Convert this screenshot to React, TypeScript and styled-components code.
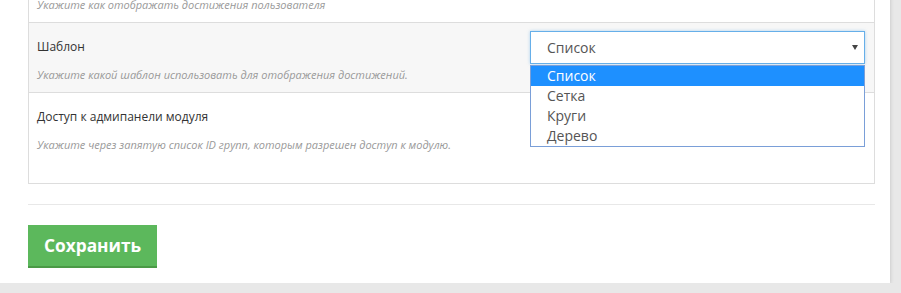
import { createGlobalStyle, styled } from 'styled-components';

const GlobalStyle = createGlobalStyle`
  html, body {
    margin: 0;
    padding: 0;
    background: #e8e8e8;
    overflow: hidden;
    font-family: 'Open Sans', 'Noto Sans', sans-serif;
  }
  * { box-sizing: border-box; }
`;

type Field = {
  label: string;
  hint: string;
  shaded?: boolean;
  tall?: boolean;
  select?: boolean;
};

const fields: Field[] = [
  { label: 'Вид отображения', hint: 'Укажите как отображать достижения пользователя' },
  { label: 'Шаблон', hint: 'Укажите какой шаблон использовать для отображения достижений.', shaded: true, select: true },
  { label: 'Доступ к адмипанели модуля', hint: 'Укажите через запятую список ID групп, которым разрешен доступ к модулю.', tall: true },
];

const options = ['Список', 'Сетка', 'Круги', 'Дерево'];

const App = () => {
  return (
    <>
      <GlobalStyle />
      <Panel>
        <FieldBox>
          {fields.map((f) => (
            <Row key={f.label} $shaded={f.shaded} $tall={f.tall}>
              <LabelCol>
                <Label>{f.label}</Label>
                <Hint>{f.hint}</Hint>
              </LabelCol>
              <ControlCol>
                {f.select && (
                  <SelectWrap>
                    <SelectBox>
                      <span>Список</span>
                      <Arrow />
                    </SelectBox>
                    <OptionList>
                      {options.map((o, i) => (
                        <Option key={o} $active={i === 0}>
                          {o}
                        </Option>
                      ))}
                    </OptionList>
                  </SelectWrap>
                )}
              </ControlCol>
            </Row>
          ))}
        </FieldBox>
        <Divider />
        <SaveButton>Сохранить</SaveButton>
      </Panel>
    </>
  );
};

export default App;

const Panel = styled.div`
  width: 890px;
  background: #fff;
  padding: 0 15px 15px 28px;
  box-shadow: 0 1px 4px rgba(0, 0, 0, 0.18);
`;

const FieldBox = styled.div`
  margin-top: -48px;
  border: 1px solid #ddd;
`;

const Row = styled.div<{ $shaded?: boolean; $tall?: boolean }>`
  display: grid;
  grid-template-columns: 1fr 335px;
  padding: 8px 9px 9px 8px;
  min-height: ${(p) => (p.$tall ? '90px' : '69px')};
  background: ${(p) => (p.$shaded ? '#f7f7f7' : '#fff')};
  border-bottom: 1px solid #ddd;

  &:last-child {
    border-bottom: none;
  }
`;

const LabelCol = styled.div`
  padding-top: 7px;
`;

const Label = styled.div`
  font-size: 12px;
  line-height: 18px;
  color: #333;
`;

const Hint = styled.div`
  margin-top: 11px;
  font-size: 11px;
  line-height: 16px;
  font-style: italic;
  color: #999;
`;

const ControlCol = styled.div``;

const SelectWrap = styled.div`
  position: relative;
`;

const SelectBox = styled.div`
  display: flex;
  align-items: center;
  justify-content: space-between;
  height: 33px;
  padding: 0 6px 0 16px;
  background: #fff;
  border: 1px solid #66afe9;
  box-shadow: 0 0 3px rgba(102, 175, 233, 0.5);
  font-size: 14px;
  color: #555;
`;

const Arrow = styled.span`
  width: 0;
  height: 0;
  border-left: 3.5px solid transparent;
  border-right: 3.5px solid transparent;
  border-top: 5px solid #444;
`;

const OptionList = styled.div`
  position: absolute;
  top: 34px;
  left: 0;
  right: 0;
  height: 82px;
  overflow: hidden;
  background: #fff;
  border: 1px solid #7a9fd8;
  z-index: 2;
`;

const Option = styled.div<{ $active?: boolean }>`
  height: 20px;
  line-height: 20px;
  padding-left: 16px;
  font-size: 14px;
  color: ${(p) => (p.$active ? '#fff' : '#555')};
  background: ${(p) => (p.$active ? '#1e90ff' : 'transparent')};
`;

const Divider = styled.div`
  margin-top: 20px;
  border-top: 1px solid #e8e8e8;
`;

const SaveButton = styled.button`
  margin-top: 20px;
  display: block;
  height: 43px;
  padding: 0 16px;
  border: none;
  border-bottom: 2px solid #4a9a46;
  background: #5cb85c;
  color: #fff;
  font-family: 'Open Sans', 'Noto Sans', sans-serif;
  font-weight: 700;
  font-size: 17.3px;
  cursor: pointer;
`;
